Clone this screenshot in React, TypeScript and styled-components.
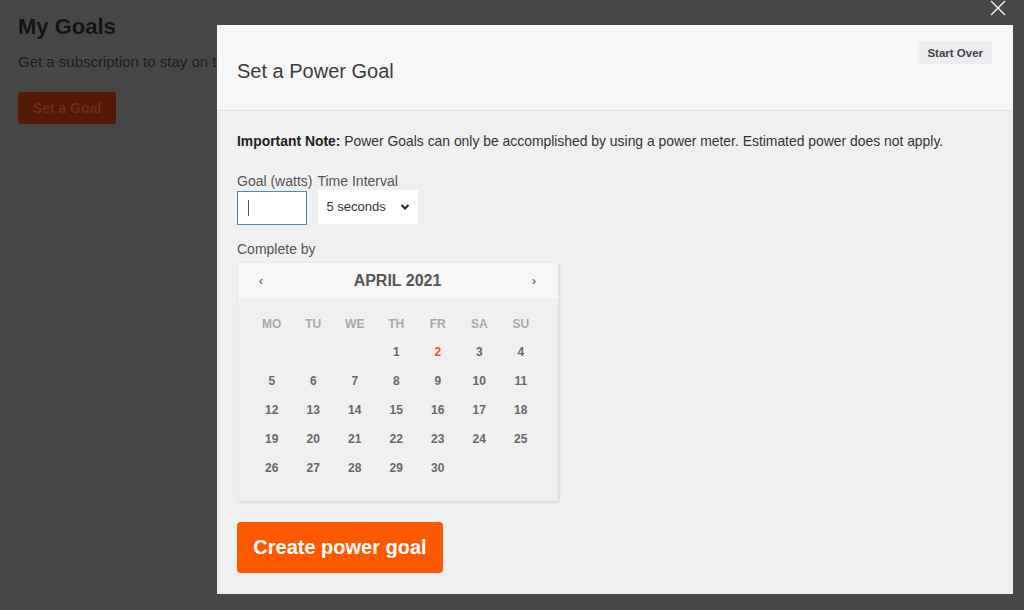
import * as React from 'react';
import styled, { createGlobalStyle } from 'styled-components';

const GlobalStyle = createGlobalStyle`
  html, body {
    margin: 0;
    padding: 0;
    background: #474747;
    font-family: "Liberation Sans", Arial, sans-serif;
  }
  * {
    box-sizing: border-box;
  }
`;

const Page = styled.div`
  height: 610px;
  padding: 14px 18px;
  overflow: hidden;
  background: #474747;
`;

const PageColumn = styled.div`
  width: 199px;
  overflow: hidden;
  white-space: nowrap;
`;

const PageTitle = styled.h1`
  margin: 0;
  font-size: 22px;
  font-weight: 700;
  color: #141414;
`;

const PageText = styled.p`
  margin: 13px 0 0;
  font-size: 15px;
  color: #1d1d1d;
`;

const GhostButton = styled.div`
  margin-top: 22px;
  width: 98px;
  height: 32px;
  border-radius: 3px;
  background: #531b03;
  color: #6a2f15;
  font-size: 14px;
  font-weight: 700;
  display: flex;
  align-items: center;
  justify-content: center;
`;

const Overlay = styled.div`
  position: fixed;
  inset: 0;
  padding: 25px 0 0 217px;
`;

const Close = styled.button`
  position: absolute;
  top: 0;
  right: 15px;
  width: 22px;
  height: 16px;
  border: 0;
  padding: 0;
  background: none;
`;

const Modal = styled.div`
  width: 796px;
  background: #f0f0f0;
`;

const Header = styled.div`
  height: 86px;
  background: #f7f7f7;
  border-bottom: 1px solid #e2e2e2;
  padding: 0 21px 0 20px;
  display: flex;
  align-items: flex-start;
  justify-content: space-between;
`;

const Title = styled.h2`
  margin: 35px 0 0;
  font-size: 20px;
  font-weight: 400;
  color: #3c3c3c;
`;

const StartOver = styled.button`
  margin-top: 16px;
  height: 23px;
  padding: 0 9px;
  border: 0;
  border-radius: 3px;
  background: #ececf1;
  color: #444;
  font-family: inherit;
  font-size: 11.5px;
  font-weight: 700;
`;

const Body = styled.div`
  padding: 22px 20px 21px;
`;

const Note = styled.p`
  margin: 0;
  font-size: 13.9px;
  color: #333;
  line-height: 16px;
  b {
    color: #222;
  }
`;

const Fields = styled.div`
  margin-top: 24px;
  display: flex;
  gap: 5px;
`;

const Field = styled.label`
  display: flex;
  flex-direction: column;
  font-size: 14px;
  color: #555;
  line-height: 16px;
`;

const Input = styled.div`
  margin-top: 2px;
  width: 70px;
  height: 34px;
  background: #fff;
  border: 1px solid #4c8ea8;
  padding: 8px 10px;
  span {
    display: block;
    width: 1px;
    height: 16px;
    background: #555;
  }
`;

const Select = styled.div`
  margin-top: 1px;
  margin-left: 1px;
  width: 100px;
  height: 34px;
  background: #fff;
  padding: 0 8px;
  display: flex;
  align-items: center;
  justify-content: space-between;
  font-size: 13px;
  color: #333;
`;

const Label = styled.div`
  margin-top: 16px;
  font-size: 14px;
  color: #555;
`;

const Calendar = styled.div`
  margin: 6px 0 0 1px;
  width: 320px;
  height: 238px;
  background: #f0f0f0;
  box-shadow: 1px 1px 3px rgba(0, 0, 0, 0.14);
`;

const CalHead = styled.div`
  height: 35px;
  background: #f7f7f7;
  display: flex;
  align-items: center;
  justify-content: space-between;
  padding: 0 18px 0 17px;
  font-size: 16px;
  font-weight: 700;
  color: #555;
`;

const Arrow = styled.span`
  font-size: 13px;
  font-weight: 400;
  color: #555;
  width: 12px;
  text-align: center;
`;

const Grid = styled.div`
  display: grid;
  grid-template-columns: repeat(7, 41.5px);
  grid-template-rows: 27px;
  grid-auto-rows: 29px;
  padding: 12px 14px 0 13px;
  justify-content: start;
  align-items: center;
`;

const Cell = styled.div<{ $head?: boolean; $today?: boolean }>`
  text-align: center;
  font-size: 12px;
  font-weight: 700;
  color: ${p => (p.$head ? '#a9a9a9' : p.$today ? '#e8581f' : '#686868')};
`;

const CreateButton = styled.button`
  margin-top: 21px;
  width: 206px;
  height: 51px;
  border: 0;
  border-radius: 4px;
  background: #ff5900;
  color: #fff;
  font-family: inherit;
  font-size: 20px;
  font-weight: 700;
`;

const days = ['MO', 'TU', 'WE', 'TH', 'FR', 'SA', 'SU'];
const dates: (number | null)[] = [null, null, null, ...Array.from({ length: 30 }, (_, i) => i + 1)];

export default function App() {
  return (
    <>
      <GlobalStyle />
      <Page>
        <PageColumn>
          <PageTitle>My Goals</PageTitle>
          <PageText>Get a subscription to stay on track with your goals.</PageText>
          <GhostButton>Set a Goal</GhostButton>
        </PageColumn>
      </Page>
      <Overlay>
        <Close aria-label="Close">
          <svg width="16" height="16" viewBox="0 0 16 16">
            <path d="M1 1 L15 15 M15 1 L1 15" stroke="#f4f4f4" strokeWidth="1.4" />
          </svg>
        </Close>
        <Modal>
          <Header>
            <Title>Set a Power Goal</Title>
            <StartOver>Start Over</StartOver>
          </Header>
          <Body>
            <Note>
              <b>Important Note:</b> Power Goals can only be accomplished by using a power meter. Estimated
              power does not apply.
            </Note>
            <Fields>
              <Field>
                Goal (watts)
                <Input>
                  <span />
                </Input>
              </Field>
              <Field>
                Time Interval
                <Select>
                  5 seconds
                  <svg width="10" height="8" viewBox="0 0 10 8">
                    <path d="M1.5 2 L5 5.5 L8.5 2" stroke="#222" strokeWidth="2" fill="none" />
                  </svg>
                </Select>
              </Field>
            </Fields>
            <Label>Complete by</Label>
            <Calendar>
              <CalHead>
                <Arrow>‹</Arrow>
                APRIL 2021
                <Arrow>›</Arrow>
              </CalHead>
              <Grid>
                {days.map(d => (
                  <Cell key={d} $head>
                    {d}
                  </Cell>
                ))}
                {dates.map((d, i) => (
                  <Cell key={i} $today={d === 2}>
                    {d ?? ''}
                  </Cell>
                ))}
              </Grid>
            </Calendar>
            <CreateButton>Create power goal</CreateButton>
          </Body>
        </Modal>
      </Overlay>
    </>
  );
}
